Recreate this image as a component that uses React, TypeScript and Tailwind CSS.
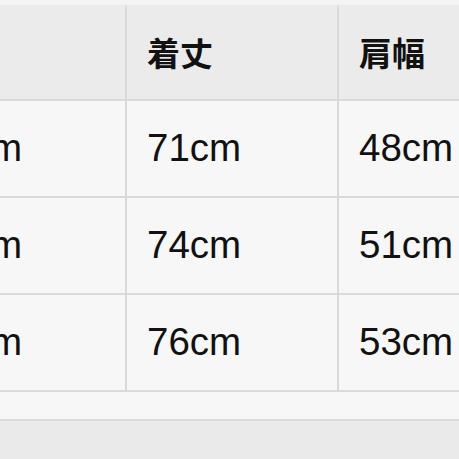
import React from "react";

const header = ["身幅", "着丈", "肩幅"];
const rows = [
  ["58cm", "71cm", "48cm"],
  ["60cm", "74cm", "51cm"],
  ["62cm", "76cm", "53cm"],
];

export default function App() {
  return (
    <div className="w-[459px] h-[459px] overflow-hidden bg-[#f7f7f7] flex flex-col">
      <div className="h-[5px] bg-[#f4f4f4] shrink-0" />
      <div className="ml-[-92px] shrink-0 grid grid-cols-[217px_210px_210px] gap-[2px] bg-[#dadada] pb-[2px] w-max">
        {header.map((h) => (
          <div
            key={h}
            className="h-[94px] bg-[#ebebeb] flex items-center pl-[20px] text-[33px] font-bold text-[#111] leading-none"
            style={{ fontFamily: '"Noto Sans CJK JP", "Noto Sans", sans-serif' }}
          >
            {h}
          </div>
        ))}
        {rows.map((r, i) =>
          r.map((c, j) => (
            <div
              key={`${i}-${j}`}
              className="h-[95px] bg-[#f7f7f7] flex items-center pl-[20px] text-[38.5px] text-[#111] leading-none"
              style={{ fontFamily: '"Liberation Sans", Arial, sans-serif' }}
            >
              {c}
            </div>
          ))
        )}
      </div>
      <div className="h-[27px] bg-[#f7f7f7] shrink-0" />
      <div className="flex-1 border-t-2 border-[#dcdcdc] bg-[#eaeaea]" />
    </div>
  );
}
